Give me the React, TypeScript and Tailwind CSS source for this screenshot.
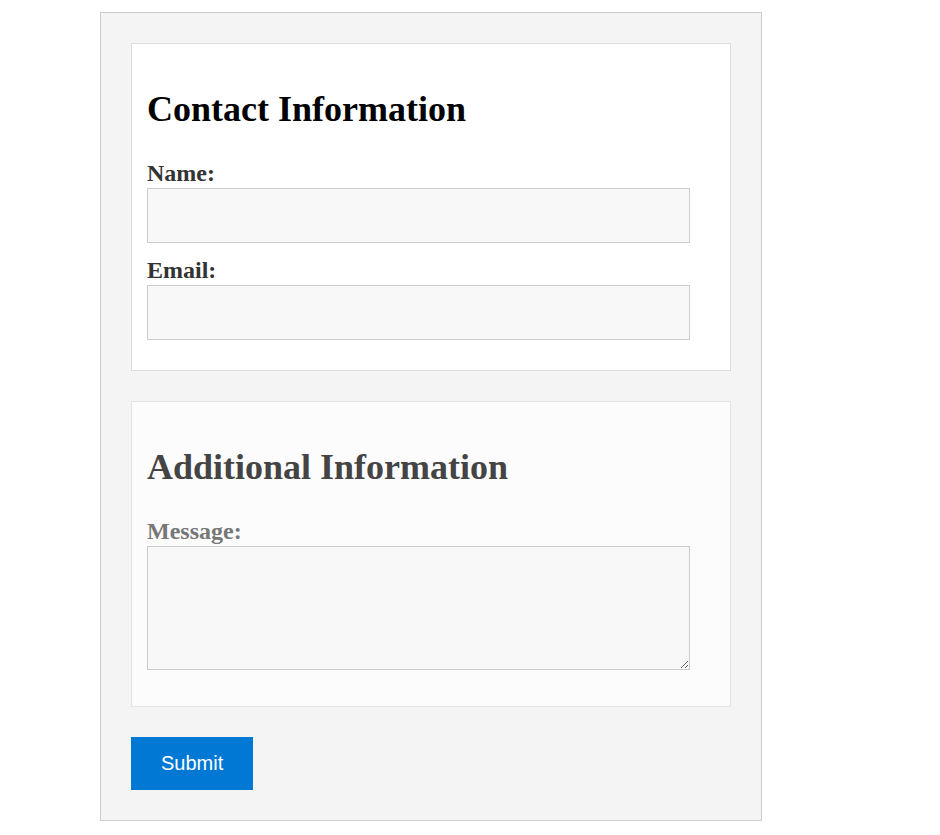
export default function App() {
  const serif = { fontFamily: '"Liberation Serif", "Times New Roman", serif' };
  return (
    <div className="min-h-screen bg-white" style={serif}>
      <form className="ml-[100px] mt-[12px] w-[662px] border border-[#cccccc] bg-[#f4f4f4] p-[30px]">
        {/* Contact */}
        <section className="border border-[#dddddd] bg-white p-[15px]">
          <h2 className="my-[30px] text-[36px] font-bold leading-[1.15] text-black">Contact Information</h2>
          <label className="block text-[24px] font-bold leading-[1.15] text-[#333333]">Name:</label>
          <input type="text" className="mb-[14px] block h-[55px] w-[543px] border border-[#cccccc] bg-[#f8f8f8] px-[10px] outline-none" />
          <label className="block text-[24px] font-bold leading-[1.15] text-[#333333]">Email:</label>
          <input type="email" className="mb-[15px] block h-[55px] w-[543px] border border-[#cccccc] bg-[#f8f8f8] px-[10px] outline-none" />
        </section>

        {/* Additional */}
        <section className="mt-[30px] border border-[#e3e3e3] bg-[#fcfcfc] p-[15px]">
          <h2 className="my-[30px] text-[36px] font-bold leading-[1.15] text-[#444444]">Additional Information</h2>
          <label className="block text-[24px] font-bold leading-[1.15] text-[#777777]">Message:</label>
          <textarea className="mb-[21px] block h-[124px] w-[543px] resize border border-[#cccccc] bg-[#f8f8f8] p-[10px] outline-none" />
        </section>

        <button
          type="button"
          className="mt-[30px] bg-[#0078d4] px-[30px] py-[15px] text-[20px] leading-[23px] text-white"
          style={{ fontFamily: '"Liberation Sans", Arial, sans-serif' }}
        >
          Submit
        </button>
      </form>
    </div>
  );
}
